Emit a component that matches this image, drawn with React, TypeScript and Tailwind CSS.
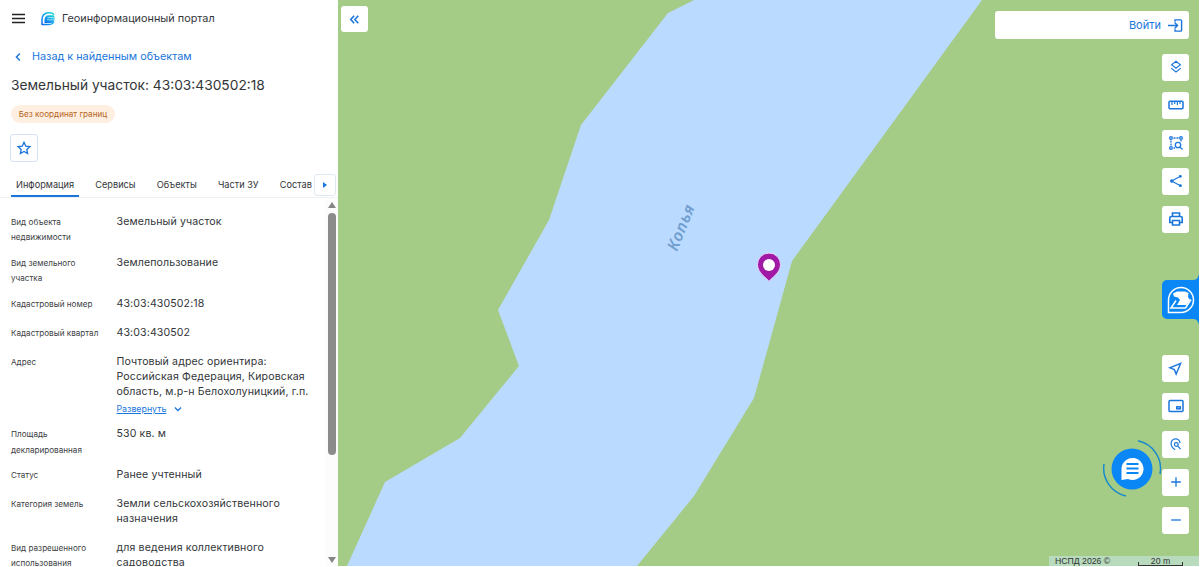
import React, { useState } from "react";

type Row = {
  label: string[];
  value: string[];
  expandable?: boolean;
};

const TABS = ["Информация", "Сервисы", "Объекты", "Части ЗУ", "Состав ЕЗП"];

const ROWS: Row[] = [
  { label: ["Вид объекта", "недвижимости"], value: ["Земельный участок"] },
  { label: ["Вид земельного", "участка"], value: ["Землепользование"] },
  { label: ["Кадастровый номер"], value: ["43:03:430502:18"] },
  { label: ["Кадастровый квартал"], value: ["43:03:430502"] },
  {
    label: ["Адрес"],
    value: ["Почтовый адрес ориентира:", "Российская Федерация, Кировская", "область, м.р-н Белохолуницкий, г.п."],
    expandable: true,
  },
  { label: ["Площадь", "декларированная"], value: ["530 кв. м"] },
  { label: ["Статус"], value: ["Ранее учтенный"] },
  { label: ["Категория земель"], value: ["Земли сельскохозяйственного", "назначения"] },
  { label: ["Вид разрешенного", "использования"], value: ["для ведения коллективного", "садоводства"] },
];

function Icon({ children, size = 16, width = 1.5 }: { children: React.ReactNode; size?: number; width?: number }) {
  return (
    <svg width={size} height={size} viewBox="0 0 16 16" fill="none" stroke="currentColor" strokeWidth={width}>
      {children}
    </svg>
  );
}

function MapButton({ title, children }: { title: string; children: React.ReactNode }) {
  return (
    <button aria-label={title} className="w-[27px] h-[27px] pb-[1px] bg-white rounded-[3px] flex items-center justify-center text-[#1b76dc]">
      {children}
    </button>
  );
}

function InfoRow({ row }: { row: Row }) {
  return (
    <div className="flex mb-[13.7px]">
      <div className="w-[105.5px] shrink-0 pt-[1px] -mb-[4.2px] text-[8.15px] leading-[15.3px] text-[#3c4043]">
        {row.label.map(line => (
          <div key={line} className="whitespace-nowrap">{line}</div>
        ))}
      </div>
      <div className="text-[10.6px] leading-[15px] text-[#333639] tracking-[0.11px]">
        {row.value.map(line => (
          <div key={line} className="whitespace-nowrap">{line}</div>
        ))}
        {row.expandable && (
          <button className="flex items-center gap-[7px] h-[20px] -mb-[6px] text-[#1b76dc] text-[8.8px] tracking-normal">
            <span className="underline">Развернуть</span>
            <Icon size={10} width={2}>
              <path d="M3 5.5l5 5 5-5" />
            </Icon>
          </button>
        )}
      </div>
    </div>
  );
}

function SidePanel() {
  const [active, setActive] = useState(TABS[0]);

  return (
    <aside className="w-[338px] shrink-0 h-[566px] bg-white flex flex-col overflow-hidden">
      <header className="h-[37px] shrink-0 flex items-center pl-[12px]">
        <svg width="13" height="11" viewBox="0 0 13 11" stroke="#222" strokeWidth="1.6">
          <path d="M0 1.500h13M0 5.500h13M0 9.500h13" />
        </svg>
        <svg className="ml-[16px]" width="14" height="14" viewBox="0 0 14 14" fill="none">
          <defs>
            <linearGradient id="logo" x1="0" y1="1" x2="1" y2="0">
              <stop offset="0" stopColor="#1268ed" />
              <stop offset="0.5" stopColor="#16a5ec" />
              <stop offset="1" stopColor="#23dcd2" />
            </linearGradient>
          </defs>
          <path d="M1 13V7A6.200 6.200 0 0 1 7.200 .8H9c2 0 3.300.8 4 2M1 12.600h6c3 0 4.800-.8 5.800-2.600" stroke="url(#logo)" strokeWidth="1.500" />
          <path d="M3.500 11V8c0-3 1.700-4.700 4.300-4.700H12c1 0 1.500.8 1.500 2V7.500c0 2-1.500 3.500-4 3.500z" fill="url(#logo)" />
          <path d="M6.500 5.600h7M6 7.800h7.500" stroke="#fff" strokeWidth=".6" />
        </svg>
        <span className="ml-[7px] text-[10.85px] text-[#333639]">Геоинформационный портал</span>
      </header>

      <a className="h-[39px] pt-[1px] shrink-0 flex items-center pl-[13px] gap-[9px] text-[10.8px] text-[#1b76dc]">
        <Icon size={10} width={2.4}>
          <path d="M11 2.500L5.500 8l5.500 5.500" />
        </Icon>
        Назад к найденным объектам
      </a>

      <h1 className="h-[18px] shrink-0 pl-[11px] leading-[18px] text-[13.75px] text-[#333639]">Земельный участок: 43:03:430502:18</h1>
      <div className="mt-[11px] ml-[11px] w-[104px] h-[18px] shrink-0 rounded-full bg-[#ffefe1] flex items-center justify-center text-[8.15px] text-[#b4651d]">
        Без координат границ
      </div>
      <button className="mt-[11px] ml-[10px] w-[28px] h-[28px] shrink-0 rounded-[3px] border border-[#d4e3f5] flex items-center justify-center text-[#1b76dc]">
        <Icon size={14}>
          <path d="M8 1.500l2 4.300 4.700.6-3.500 3.200.9 4.700L8 12l-4.100 2.300.9-4.700L1.300 6.400 6 5.800z" />
        </Icon>
      </button>

      <nav className="mt-[11px] h-[25px] shrink-0 flex pl-[11px] border-b border-[#eef1f4] relative overflow-hidden">
        {TABS.map(tab => (
          <button
            key={tab}
            onClick={() => setActive(tab)}
            className={`h-[24px] px-[5px] mr-[11.2px] pt-[1px] text-[9.2px] leading-[21px] text-[#333639] whitespace-nowrap border-b-2 ${active === tab ? "border-b-[#1b76dc]" : "border-b-transparent"}`}
          >
            {tab}
          </button>
        ))}
        <div className="absolute left-[314px] top-[1px] w-[24px] h-[23px] bg-white">
          <button className="w-[22px] h-[22px] border border-[#dfe7f0] rounded-[3px] bg-white flex items-center justify-center">
            <svg width="4" height="6" viewBox="0 0 4 6" fill="#1b76dc"><path d="M0 0l4 3-4 3z" /></svg>
          </button>
        </div>
      </nav>

      <div className="flex-1 min-h-0 flex">
        <div className="flex-1 min-w-0 overflow-hidden pl-[11px] pt-[16px]">
          {ROWS.map(row => <InfoRow key={row.label[0]} row={row} />)}
        </div>
        <div className="w-[12px] shrink-0 bg-[#fcfcfc] flex flex-col items-center">
          <svg className="mt-[4px] shrink-0" width="8" height="6" viewBox="0 0 8 6" fill="#858585"><path d="M4 0l4 6H0z" /></svg>
          <div className="mt-[5px] w-[8px] h-[242px] shrink-0 rounded-full bg-[#8b8b8b]" />
          <svg className="mt-auto mb-[3px] shrink-0" width="8" height="6" viewBox="0 0 8 6" fill="#858585"><path d="M0 0h8L4 6z" /></svg>
        </div>
      </div>
    </aside>
  );
}

export default function App() {
  return (
    <div className="w-[1200px] h-[567px] flex overflow-hidden bg-white font-['Inter',sans-serif]">
      <SidePanel />
      <main className="relative w-[861px] h-[566px] overflow-hidden bg-[#a5cc87]">
        <svg className="absolute inset-0" width="861" height="566" viewBox="338 0 861 566">
          <path d="M694 0L668 13 581 125 549 220 498 310 519 366 460 438 385 482 347 566H637L694 496 754 398 792 261 982 0z" fill="#bbdaff" />
          <text
            x="0"
            y="0"
            transform="translate(677 252) rotate(-68)"
            fill="#709fd0"
            fontFamily="Noto Sans"
            fontSize="16"
            fontWeight="600"
            fontStyle="italic"
            textLength="48"
          >
            Копья
          </text>
          <path d="M769 281.500c-2-3.500-11.500-8-11.500-17a11.500 11.500 0 0 1 23 0c0 9-9.500 13.500-11.500 17z" fill="#a01aa5" stroke="#eadcff" strokeWidth="1" />
          <circle cx="769" cy="265" r="6" fill="#fff" />
        </svg>

        <button className="absolute left-[3px] top-[6px] w-[27px] h-[26px] bg-white rounded-[3px] flex items-center justify-center text-[#1b76dc]">
          <Icon size={11} width={2.3}>
            <path d="M7.500 2.500L2.500 8l5 5.500M13.500 2.500L8.500 8l5 5.500" />
          </Icon>
        </button>

        <div className="absolute right-[10px] top-[11px] w-[194px] h-[28px] bg-white rounded-[3px] flex items-center justify-end gap-[7px] pr-[6px] text-[#1b76dc] text-[11px]">
          Войти
          <Icon size={15} width={1.5}>
            <path d="M7.500 4V2h6q1 0 1 1v10q0 1-1 1h-6v-2M0 8h10M7 4.800L10.200 8 7 11.200" />
          </Icon>
        </div>

        <div className="absolute right-[10px] top-[54px] flex flex-col gap-[11px]">
          <MapButton title="Слои">
            <Icon size={14} width={1.3}>
              <path d="M8 1.500l5 4-5 4-5-4zM2.500 9.300L8 13.700l5.500-4.400" />
            </Icon>
          </MapButton>
          <MapButton title="Линейка">
            <Icon>
              <rect x="1" y="4.200" width="14" height="7.600" rx="1" />
              <path d="M4 5v3M6.700 5v2M9.400 5v3M12 5v2" strokeWidth="1.2" />
            </Icon>
          </MapButton>
          <MapButton title="Поиск по области">
            <Icon width={1.3}>
              <circle cx="3" cy="3" r="1.300" /><circle cx="13" cy="3" r="1.300" /><circle cx="3" cy="13" r="1.300" />
              <path d="M5.500 3h5M3 5.500v5M13 5v1.500M5.500 13H7" strokeDasharray="2 1" />
              <circle cx="10" cy="10" r="2.700" /><path d="M12 12l2.500 2.500" />
            </Icon>
          </MapButton>
          <MapButton title="Поделиться">
            <Icon size={14} width={1.300}>
              <path d="M13 2.500L3 8l10 5.500" />
              <g fill="currentColor"><circle cx="13" cy="2.700" r="1" /><circle cx="3.200" cy="8" r="1.300" /><circle cx="13" cy="13.300" r="1" /></g>
            </Icon>
          </MapButton>
          <MapButton title="Печать">
            <Icon width={1.6}>
              <path d="M4.500 5V2h7v3M4 11.500H1.800V7q0-1.500 1.500-1.500h9.400q1.500 0 1.500 1.500v4.500H12M4.500 9.500h7V14h-7z" />
            </Icon>
          </MapButton>
        </div>

        <div className="absolute right-[10px] top-[355px] flex flex-col gap-[11px]">
          <MapButton title="Моё местоположение">
            <Icon size={15}>
              <path d="M13.500 2.500L2 7.300l4.800 1.900 1.900 4.800z" />
            </Icon>
          </MapButton>
          <MapButton title="Обзорная карта">
            <Icon>
              <rect x="1" y="2.500" width="14" height="11" rx="1" /><rect x="8.800" y="8.800" width="3.500" height="2" />
            </Icon>
          </MapButton>
          <MapButton title="Поиск рядом">
            <Icon size={13}>
              <path d="M7.500 14.500C4 12 2.500 9.600 2.500 6.800A5.500 5.500 0 0 1 13.500 6.300" />
              <circle cx="9" cy="8" r="2.300" /><path d="M10.700 9.700l3.500 4" />
            </Icon>
          </MapButton>
          <MapButton title="Приблизить">
            <Icon size={14}><path d="M8 2.500v11M2.500 8h11" /></Icon>
          </MapButton>
          <MapButton title="Отдалить">
            <Icon size={14}><path d="M2.500 8h11" /></Icon>
          </MapButton>
        </div>

        <div className="absolute right-0 top-[274px] w-[37px] h-[51px]">
          <svg width="37" height="51" viewBox="0 0 37 51" fill="none">
            <path d="M37 0c-1 5-3 6-7 6H5a5 5 0 0 0-5 5v29a5 5 0 0 0 5 5h25c4 0 6 1 7 6z" fill="#0b87f5" />
            <path d="M6.500 38.500V26A12.500 12.500 0 1 1 19 38.500z" stroke="#fff" strokeWidth="1.500" />
            <path d="M11 19.500l4-2h8l3.500 1.500-.5 4 2 3-3.500 5H15l3-5-2-2.500-4-1z" fill="#fff" />
            <path d="M14 26.500l-5 7.500h14.500l5.500-8.500" stroke="#fff" strokeWidth="1.500" />
          </svg>
        </div>

        <div className="absolute left-[764px] top-[439px] w-[60px] h-[60px]">
          <svg width="60" height="60" viewBox="0 0 60 60" fill="none">
            <circle cx="30" cy="30" r="20.500" fill="#0b87f5" />
            <path d="M36 1.800A28.500 28.500 0 0 1 58 35M2 25a28.500 28.500 0 0 0 22 32" stroke="#188acb" strokeWidth="1.500" />
            <path d="M19.500 41V29.500a11 11 0 1 1 6.500 10.500z" fill="#fff" />
            <path d="M24.500 25h12M24.500 29.500h12M24.500 34h12" stroke="#0b87f5" strokeWidth="1.800" />
          </svg>
        </div>

        <div className="absolute right-0 bottom-0 h-[10px] w-[150px] bg-[#b8dbbd] flex items-center font-['Liberation_Sans',sans-serif] text-[8.7px] leading-[10px] text-[#333]">
          <span className="ml-[6px]">НСПД 2026 ©</span>
          <div className="ml-auto mr-[16px] w-[45px] h-[10px] flex flex-col justify-end relative">
            <div className="h-[4px] border border-t-0 border-[#333]" />
            <span className="absolute inset-x-0 top-0 text-center">20 m</span>
          </div>
        </div>
      </main>
    </div>
  );
}
